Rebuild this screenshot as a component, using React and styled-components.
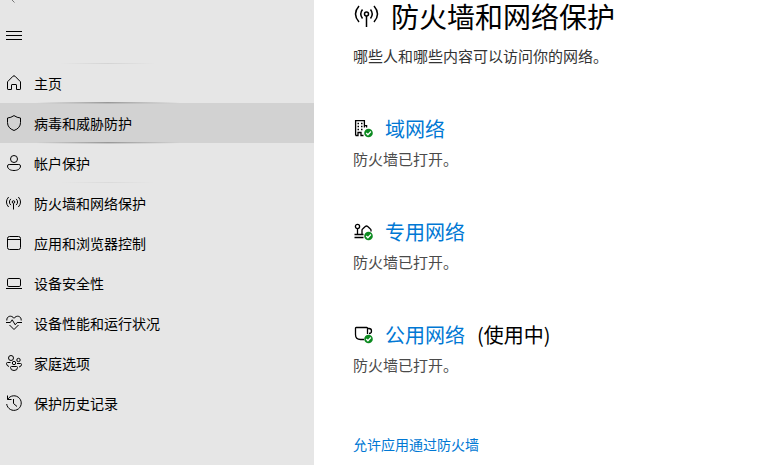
import styled, { createGlobalStyle } from 'styled-components'

const navItems = [
    { label: '主页', icon: 'home', top: 0.08, bottom: 0.34 },
    { label: '病毒和威胁防护', icon: 'shield', active: true, top: 0.12, bottom: 0.28 },
    { label: '帐户保护', icon: 'account', top: 0.14, bottom: 0.05 },
    { label: '防火墙和网络保护', icon: 'signal' },
    { label: '应用和浏览器控制', icon: 'app' },
    { label: '设备安全性', icon: 'laptop' },
    { label: '设备性能和运行状况', icon: 'heart' },
    { label: '家庭选项', icon: 'family' },
    { label: '保护历史记录', icon: 'history' },
]

const networks = [
    { name: '域网络', icon: 'building' },
    { name: '专用网络', icon: 'house' },
    { name: '公用网络', icon: 'cup', note: '(使用中)' },
]

const glyphs = {
    home: <path d="M1.5 6.8 7 1.2Q8 .3 9 1.2l5.500 5.600v7.100q0 .6-.6.6h-3.400V10q0-.5-.5-.5H6q-.5 0-.5.5v4.500H2.100q-.6 0-.6-.6z" />,
    shield: <path d="M8 .6Q11 2.700 14.500 3v4.500q0 5.600-6.500 8-6.500-2.400-6.500-8V3Q5 2.700 8 .6z" />,
    account: (
        <>
            <circle cx="8" cy="4" r="3.5" />
            <path d="M3.2 9.5h9.6q1.7 0 1.7 1.500c0 3-3 4.500-6.500 4.500S1.500 14 1.500 11q0-1.500 1.700-1.500z" />
        </>
    ),
    signal: (
        <>
            <circle cx="7.5" cy="7" r="1.3" />
            <path d="M7.5 8.5v6M4.900 10.100a4 4 0 0 1 0-6.200M10.100 10.100a4 4 0 0 0 0-6.200M2.600 12q-4.300-5 0-10M12.400 12q4.300-5 0-10" />
        </>
    ),
    app: (
        <>
            <rect x="1.5" y="1.5" width="13" height="13" rx="2" />
            <path d="M1.5 4.5h13" />
        </>
    ),
    laptop: (
        <>
            <rect x="1.5" y="3.5" width="13" height="8" rx="1.3" />
            <path d="M0 13.5h16" />
        </>
    ),
    heart: (
        <path d="M.8 5.500C.4 1 5.500-.3 8 3.300 10.500-.3 15.600 1 15.200 5.500M0 7.500h4.300l1.900-2.700 3 5 2-2.300H16M3.500 10 8 14.500l4.500-4.500" />
    ),
    family: (
        <>
            <circle cx="5" cy="3" r="2.5" />
            <circle cx="12.5" cy="5" r="1.7" />
            <circle cx="8" cy="8" r="1.7" />
            <path d="M4.5 7.5h-3q-1 0-1 1 0 2.300 2.500 3M11 8.500h3.500q1 0 1 1 0 2-2.500 2.500M5.500 11.500h5q1 0 1 1 0 3-3.500 3t-3.500-3q0-1 1-1z" />
        </>
    ),
    history: (
        <path d="M1.5.5v4h4M1.700 4.300A7.300 7.300 0 1 1 .7 9M7.500 4v4.500l3.500 3" />
    ),
}

const networkGlyphs = {
    building: (
        <>
            <path d="M1.6 16.500V1.600h8.800v7M10.400 6.600h2.200v2M1.600 16.500H4v-3h3v3h2.500" />
            <path d="M3.500 4.500H5M7 4.500h1.500M3.500 7.500H5M7 7.500h1.500M3.500 10.500H5M7 10.500h1.500" />
        </>
    ),
    house: (
        <>
            <circle cx="3.5" cy="4.5" r="2.1" />
            <path d="M3.5 6.600v5.400M.5 12.500h9M.5 15.500h9M8 12V8.200Q8 7.500 8.600 7L11.300 4.500Q12.500 3.500 13.700 4.500L16.400 7Q17 7.500 17 8.200V9.500" />
        </>
    ),
    cup: (
        <path d="M13.500 9V3.200q0-.7-.7-.7H2.200q-.7 0-.7.7V9.500q0 5 5 5H10M13.500 3.500h1.500q2.500 0 2.500 2.500T15 8.500" />
    ),
}

function App() {
    return (
        <>
            <GlobalStyle />
            <Page>
                <Sidebar>
                    <TitleBar>
                        <BackButton type="button" aria-label="返回">
                            <svg width="16" height="14" viewBox="0 0 16 14">
                                <path d="M8 1 2 7l6.500 6.500M2 7h13" />
                            </svg>
                        </BackButton>
                    </TitleBar>
                    <MenuButton type="button" aria-label="菜单">
                        <svg width="16" height="16" viewBox="0 0 16 16">
                            <path d="M0 4.5h16M0 8.5h16M0 12.5h16" />
                        </svg>
                    </MenuButton>
                    <nav>
                        <NavList>
                            {navItems.map(item => (
                                <li key={item.label}>
                                    <NavLink
                                        href="#"
                                        $active={item.active}
                                        $top={item.top}
                                        $bottom={item.bottom}
                                    >
                                        <NavIcon viewBox="0 0 16 16" aria-hidden="true">
                                            {glyphs[item.icon]}
                                        </NavIcon>
                                        {item.label}
                                    </NavLink>
                                </li>
                            ))}
                        </NavList>
                    </nav>
                </Sidebar>
                <Main>
                    <Heading>
                        <HeadingIcon viewBox="0 0 26 26" aria-hidden="true">
                            <circle cx="13.5" cy="11" r="2" />
                            <path d="M13.5 13v11M9.500 15.500q-3.500-4.500 0-9M17.500 15.500q3.500-4.500 0-9M6 19q-7-8 0-16M21 19q7-8 0-16" />
                        </HeadingIcon>
                        <h1>防火墙和网络保护</h1>
                    </Heading>
                    <Intro>哪些人和哪些内容可以访问你的网络。</Intro>
                    {networks.map(network => (
                        <Network key={network.name}>
                            <NetworkTitle>
                                <NetworkIcon viewBox="-1 0 20 20" aria-hidden="true">
                                    {networkGlyphs[network.icon]}
                                    <Badge cx="14.5" cy="14" r="4.3" />
                                    <Tick d="m12.2 14 1.700 1.700 3-3.200" />
                                </NetworkIcon>
                                <a href="#">{network.name}</a>
                                {network.note && <span>{network.note}</span>}
                            </NetworkTitle>
                            <Status>防火墙已打开。</Status>
                        </Network>
                    ))}
                    <AllowLink href="#">允许应用通过防火墙</AllowLink>
                </Main>
            </Page>
        </>
    )
}

export default App

/**Style */

const GlobalStyle = createGlobalStyle`
* {
    box-sizing: border-box;
}
body {
    margin: 0;
    background: #fff;
    color: #000;
    font-family: "Noto Sans CJK SC", "Noto Sans", sans-serif;
    font-size: 14px;
}
h1, h2, p, ul {
    margin: 0;
    padding: 0;
    font-weight: 400;
}
a {
    color: #0078d4;
    text-decoration: none;
}
svg {
    flex: none;
    fill: none;
    stroke: currentColor;
}
`
const Page = styled.div`
display: flex;
min-height: 100vh;
`
const Sidebar = styled.aside`
flex: none;
width: 314px;
background: #e6e6e6;
`
const TitleBar = styled.div`
display: flex;
align-items: flex-end;
height: 3px;
padding-left: 6px;
overflow: hidden;
`
const BackButton = styled.button`
display: flex;
padding: 0;
border: 0;
background: none;
color: #777;
`
const MenuButton = styled.button`
display: flex;
align-items: center;
height: 40px;
margin: 12px 0 8px;
padding: 0 6px;
border: 0;
background: none;
color: #000;
`
const NavList = styled.ul`
list-style: none;
`
// faint edges fade out sooner than strong ones
const glow = (strength = 0) => {
    const reach = strength < 0.1 ? 48 : 72
    return `linear-gradient(90deg, transparent ${108 - reach}px, rgba(0, 0, 0, ${strength}) 108px, transparent ${108 + reach}px)`
}
const NavLink = styled.a`
display: flex;
align-items: center;
gap: 12px;
height: 40px;
padding: 0 6px;
color: #000;
background-image: ${props => `${glow(props.$top)}, ${glow(props.$bottom)}`};
background-color: ${props => props.$active ? '#d2d2d2' : 'transparent'};
background-size: 100% 1px;
background-position: top, bottom;
background-repeat: no-repeat;
`
const NavIcon = styled.svg`
width: 16px;
height: 16px;
`
const Main = styled.main`
flex: 1;
min-width: 0;
padding: 0 39px;
`
const Heading = styled.header`
display: flex;
align-items: center;
gap: 12px;

h1{
    font-size: 28px;
    line-height: 32px;
}
`
const HeadingIcon = styled.svg`
width: 26px;
height: 26px;
stroke-width: 1.5;
`
const Intro = styled.p`
margin-top: 14px;
color: #333;
font-size: 15px;
line-height: 20px;
`
const Network = styled.section`
margin-top: 49px;
`
const NetworkTitle = styled.h2`
display: flex;
align-items: center;
gap: 12px;
font-size: 20px;
line-height: 28px;
`
const NetworkIcon = styled.svg`
width: 20px;
height: 20px;
stroke-width: 1.3;
`
const Badge = styled.circle`
fill: #0b8a1f;
stroke: none;
`
const Tick = styled.path`
stroke: #fff;
`
const Status = styled.p`
margin-top: 6px;
color: #4a4a4a;
font-size: 15px;
line-height: 20px;
`
const AllowLink = styled.a`
display: inline-block;
margin-top: 59px;
line-height: 20px;
`
/****/
